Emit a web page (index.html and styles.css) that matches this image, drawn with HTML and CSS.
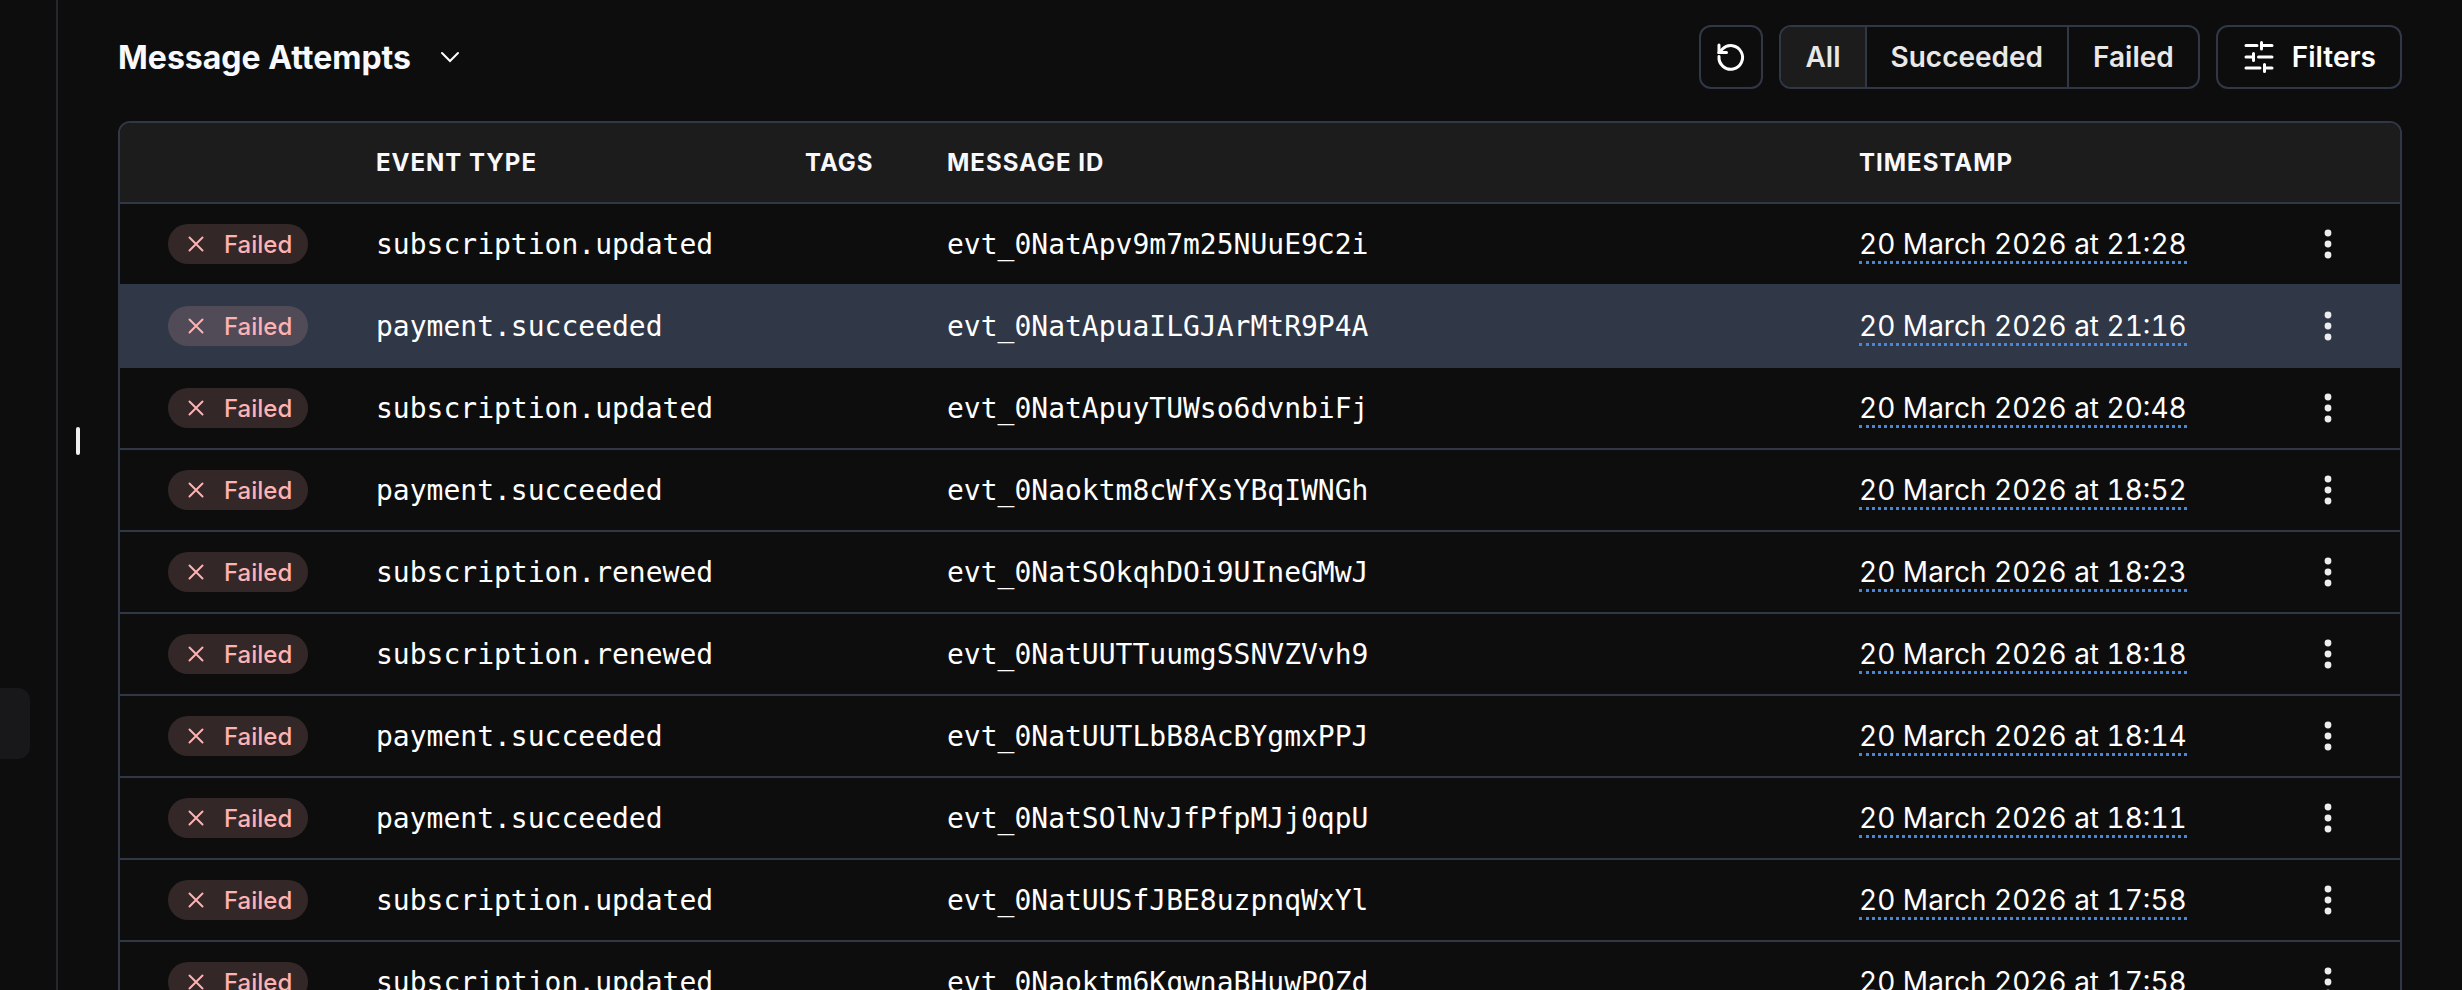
FILE: index.html
```html
<!DOCTYPE html>
<html lang="en">
  <head>
    <title>Message Attempts</title>
    <meta charset="utf-8" />
    <meta name="viewport" content="width=device-width, initial-scale=1" />
    <link rel="stylesheet" href="styles.css">
  </head>
  <body>
    <aside class="sidebar">
      <div class="sidebar-item"></div>
    </aside>
    <div class="resizer"><span class="grip"></span></div>

    <main class="content">
      <header class="toolbar">
        <button class="title" type="button">
          <h1>Message Attempts</h1>
          <svg class="chevron" viewBox="0 0 20 20"><path d="M2 6l8 8 8-8" /></svg>
        </button>
        <div class="actions">
          <button class="btn btn-icon" type="button" aria-label="Refresh">
            <svg class="icon" viewBox="0 0 32 32">
              <path d="M4 4v7.500h7.500" />
              <path d="M4 15.500A11.800 11.800 0 1 0 7.500 8L4 11.500" />
            </svg>
          </button>
          <div class="btn-group">
            <button class="active" type="button">All</button>
            <button type="button">Succeeded</button>
            <button type="button">Failed</button>
          </div>
          <button class="btn" type="button">
            <svg class="icon" viewBox="0 0 32 32">
              <path d="M4 4.500h11M19.500 4.500h10.500M19.500 1.500v6.500M4 16h7M16.500 16h13.500M11.500 12.500v7M4 27h14M22.500 27h7.500M22.500 23.500v7" />
            </svg>
            Filters
          </button>
        </div>
      </header>

      <div class="table-wrap">
        <table>
          <colgroup>
            <col class="col-status">
            <col class="col-type">
            <col class="col-tags">
            <col class="col-id">
            <col class="col-time">
            <col class="col-menu">
          </colgroup>
          <thead>
            <tr>
              <th></th>
              <th>Event Type</th>
              <th>Tags</th>
              <th>Message ID</th>
              <th>Timestamp</th>
              <th></th>
            </tr>
          </thead>
          <tbody id="attempts"></tbody>
        </table>
      </div>
    </main>

    <script src="script.js"></script>
  </body>
</html>
```

FILE: styles.css
```css
* {
  box-sizing: border-box;
}
body {
  margin: 0;
  height: 100vh;
  display: flex;
  overflow: hidden;
  background: #0d0d0d;
  color: #fff;
  font-family: Inter, sans-serif;
  font-size: 28px;
}
button {
  font: inherit;
  color: inherit;
  background: none;
  border: 0;
  padding: 0;
  cursor: pointer;
}
svg {
  fill: none;
  stroke: currentColor;
  stroke-width: 3;
  stroke-linecap: round;
}

/* Left edge */
.sidebar {
  width: 58px;
  flex: none;
  border-right: 2px solid #26272b;
}
.sidebar-item {
  width: 30px;
  height: 71px;
  margin-top: 688px;
  border-radius: 0 12px 12px 0;
  background: #18181a;
}
.resizer {
  width: 60px;
  flex: none;
  padding: 427px 0 0 18px;
}
.grip {
  display: block;
  width: 4px;
  height: 28px;
  border-radius: 2px;
  background: #f0f0f0;
}

.content {
  flex: 1;
  min-width: 0;
  padding: 25px 60px 0 0;
}
.toolbar {
  display: flex;
  justify-content: space-between;
  align-items: center;
  height: 64px;
  margin-bottom: 32px;
}
.title {
  display: flex;
  align-items: center;
  gap: 29px;
}
h1 {
  margin: 0;
  font-size: 32px;
  font-weight: 700;
  color: #f9f9fd;
}
.chevron {
  width: 20px;
  height: 20px;
  stroke-width: 2;
}
.actions {
  display: flex;
  gap: 16px;
  font-weight: 600;
}
.btn,
.btn-group {
  display: flex;
  align-items: center;
  height: 64px;
  border: 2px solid #303747;
  border-radius: 12px;
}
.btn {
  gap: 18px;
  padding: 0 24px;
}
.btn-icon {
  width: 64px;
  padding: 0 14px;
}
.icon {
  width: 32px;
  height: 32px;
}
.btn-group {
  overflow: hidden;
  color: #e8e8e8;
}
.btn-group button {
  height: 100%;
  padding: 0 24px;
}
.btn-group button + button {
  border-left: 2px solid #303747;
}
.btn-group .active {
  background: #1c1c1c;
}

/* Attempts table */
.table-wrap {
  border: 2px solid #303747;
  border-radius: 12px;
  overflow: hidden;
}
table {
  width: 100%;
  table-layout: fixed;
  border-collapse: separate;
  border-spacing: 0;
}
.col-status {
  width: 240px;
}
.col-type {
  width: 429px;
}
.col-tags {
  width: 142px;
}
.col-time {
  width: 429px;
}
.col-menu {
  width: 128px;
}
th,
td {
  height: 82px;
  padding: 0 16px;
  text-align: left;
  vertical-align: middle;
  white-space: nowrap;
  border-bottom: 2px solid #303747;
}
th {
  height: 81px;
  background: #1c1c1c;
  color: #f9f9fd;
  font-size: 24px;
  font-weight: 700;
  letter-spacing: 1px;
  text-transform: uppercase;
}
td:first-child {
  padding-left: 48px;
}
.selected {
  background: #303747;
}
.badge {
  display: flex;
  align-items: center;
  gap: 20px;
  width: 140px;
  height: 40px;
  padding-left: 20px;
  border-radius: 20px;
  background: rgba(254, 178, 178, 0.16);
  color: #feb2b2;
  font-size: 24px;
  font-weight: 500;
}
.badge svg {
  width: 16px;
  height: 16px;
  stroke-width: 2;
}
.mono {
  font-family: "DejaVu Sans Mono", monospace;
}
time {
  display: block;
  width: max-content;
  margin-top: 2px;
  line-height: 34px;
  font-variant-numeric: tabular-nums;
  border-bottom: 3px dotted #4a86d4;
}
.menu {
  display: block;
  margin-left: 24px;
}
.menu svg {
  display: block;
  width: 32px;
  height: 32px;
  fill: #ededed;
  stroke: none;
}
```

FILE: script.js
```js
const attempts = [
  ["subscription.updated", "evt_0NatApv9m7m25NUuE9C2i", "21:28"],
  ["payment.succeeded", "evt_0NatApuaILGJArMtR9P4A", "21:16"],
  ["subscription.updated", "evt_0NatApuyTUWso6dvnbiFj", "20:48"],
  ["payment.succeeded", "evt_0Naoktm8cWfXsYBqIWNGh", "18:52"],
  ["subscription.renewed", "evt_0NatSOkqhDOi9UIneGMwJ", "18:23"],
  ["subscription.renewed", "evt_0NatUUTTuumgSSNVZVvh9", "18:18"],
  ["payment.succeeded", "evt_0NatUUTLbB8AcBYgmxPPJ", "18:14"],
  ["payment.succeeded", "evt_0NatSOlNvJfPfpMJj0qpU", "18:11"],
  ["subscription.updated", "evt_0NatUUSfJBE8uzpnqWxYl", "17:58"],
  ["subscription.updated", "evt_0Naoktm6KqwnaBHuwPOZd", "17:58"],
];
const selected = 1;

document.getElementById("attempts").innerHTML = attempts
  .map(
    ([type, id, time], i) => `
    <tr class="${i === selected ? "selected" : ""}">
      <td><span class="badge"><svg viewBox="0 0 16 16"><path d="M1.500 1.500l13 13M14.500 1.500l-13 13" /></svg>Failed</span></td>
      <td class="mono">${type}</td>
      <td></td>
      <td class="mono">${id}</td>
      <td><time datetime="2026-03-20T${time}">20 March 2026 at ${time}</time></td>
      <td>
        <button class="menu" type="button" aria-label="Actions">
          <svg viewBox="0 0 32 32"><circle cx="16" cy="5" r="3.400" /><circle cx="16" cy="16" r="3.400" /><circle cx="16" cy="27" r="3.400" /></svg>
        </button>
      </td>
    </tr>`
  )
  .join("");
```
